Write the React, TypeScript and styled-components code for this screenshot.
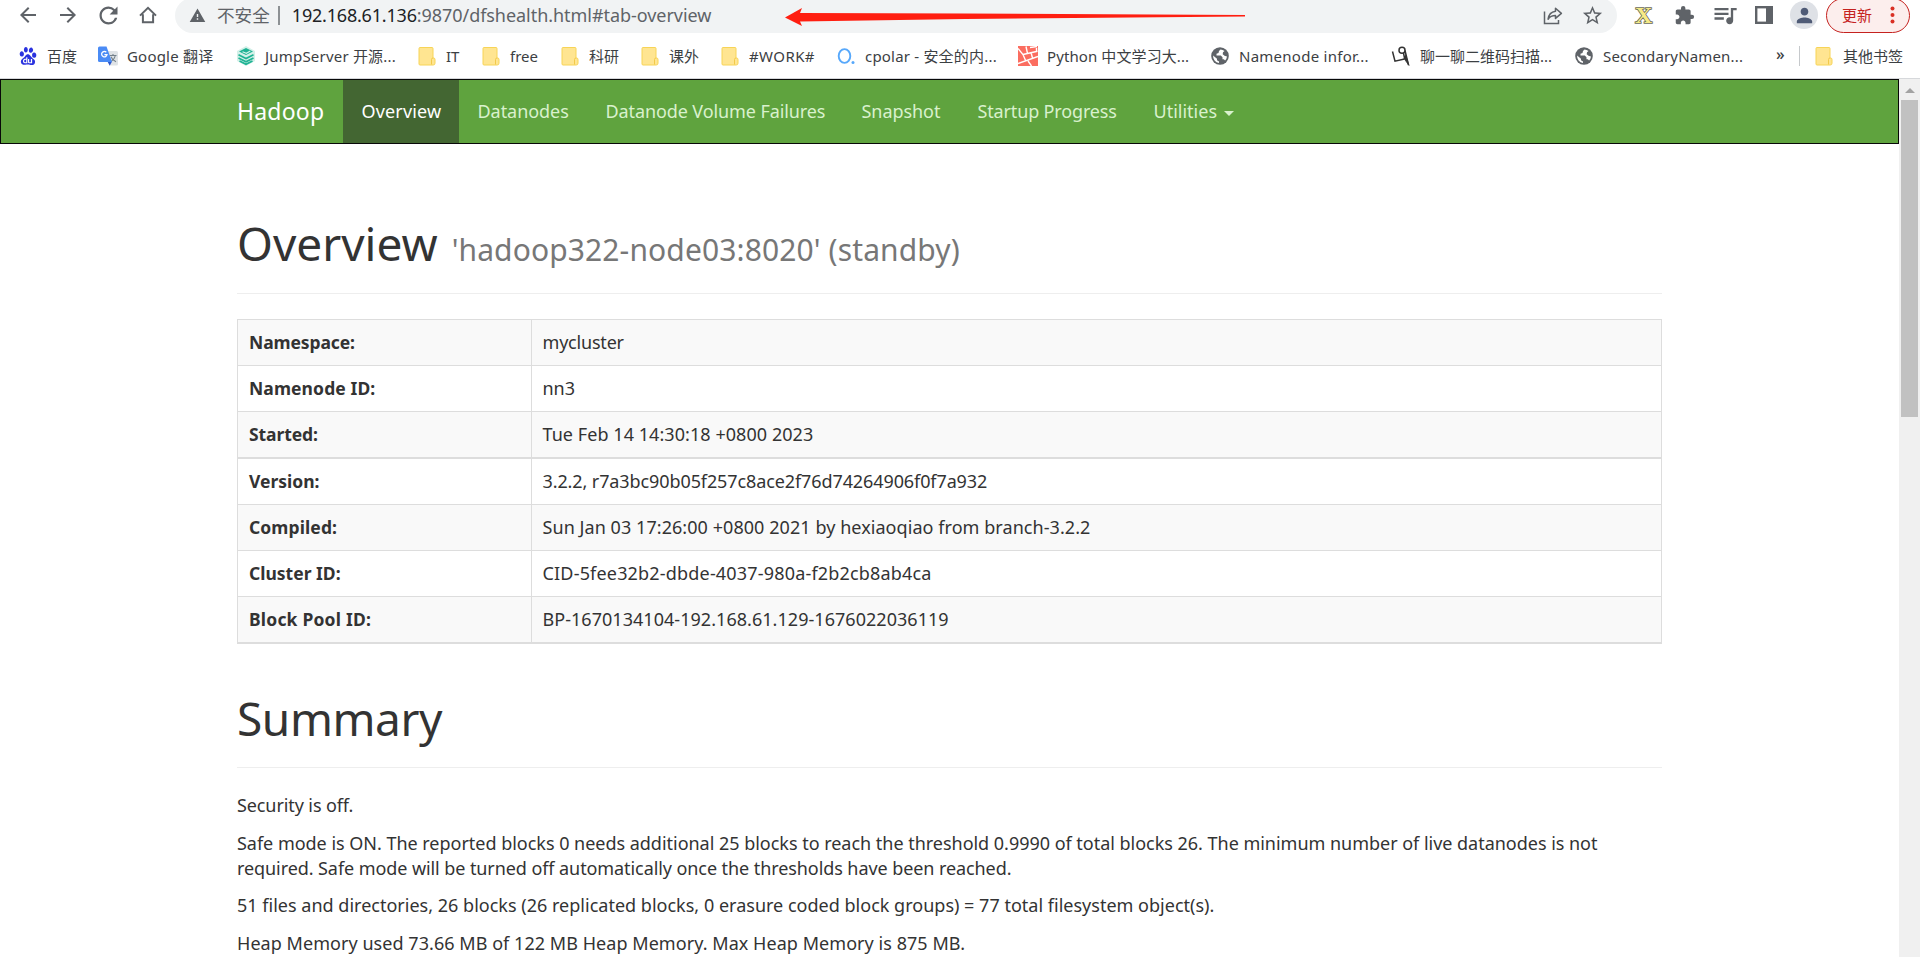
import React from 'react';
import styled, { createGlobalStyle } from 'styled-components';
import {
  MdArrowBack,
  MdArrowForward,
  MdRefresh,
  MdWarning,
  MdStarBorder,
  MdExtension,
  MdQueueMusic,
  MdPerson,
} from 'react-icons/md';
import { SiBaidu } from 'react-icons/si';

const GlobalStyle = createGlobalStyle`
  * { box-sizing: border-box; }
  body {
    margin: 0;
    background: #fff;
    color: #333;
    font-family: "Noto Sans", "Noto Sans CJK SC", sans-serif;
    font-size: 18px;
    line-height: 25px;
    overflow: hidden;
  }
`;

/* ---------- browser chrome ---------- */

const Window = styled.div`
  width: 1920px;
  height: 957px;
  display: flex;
  flex-direction: column;
  overflow: hidden;
`;

const Toolbar = styled.div`
  flex: none;
  height: 33px;
  display: flex;
  padding-left: 8px;
  color: #5f6368;
`;

const NavSlot = styled.span`
  width: 40px;
  height: 30px;
  display: flex;
  align-items: center;
  justify-content: center;
`;

const Omnibox = styled.div`
  position: relative;
  width: 1442px;
  height: 35px;
  margin: -2px 0 0 7px;
  padding: 0 13px 0 14px;
  border-radius: 18px;
  background: #f1f3f4;
  display: flex;
  align-items: center;
  line-height: 35px;
`;

const Insecure = styled.span`
  margin-left: 11px;
  font-size: 17.6px;
  white-space: nowrap;
`;

const Separator = styled.span`
  width: 2px;
  height: 19px;
  margin: 0 12px 0 8px;
  background: #8d9194;
`;

const Url = styled.span`
  white-space: nowrap;
  font-size: 18px;
  letter-spacing: -0.05px;
  flex: 1;
`;

const Host = styled.span`
  color: #202124;
  letter-spacing: -0.2px;
`;

const RedArrow = styled.svg`
  position: absolute;
  left: 610px;
  top: 9px;
`;

const OmniActions = styled.span`
  display: flex;
  align-items: center;
  gap: 18px;
  height: 31px;
`;

const Extensions = styled.div`
  display: flex;
  align-items: center;
  height: 30px;
  margin-left: 18px;
`;

const ExtSlot = styled.span<{ $w: number }>`
  width: ${(p) => p.$w}px;
  height: 30px;
  display: flex;
  align-items: center;
`;

const ExtX = styled.span`
  font: bold 24px/30px "Liberation Serif", serif;
  color: #f6ea86;
  -webkit-text-stroke: 1.6px #6a6a5a;
  paint-order: stroke fill;
`;

const Avatar = styled.span`
  width: 28px;
  height: 28px;
  border-radius: 50%;
  background: #dee1e6;
  color: #4f5b76;
  display: flex;
  align-items: center;
  justify-content: center;
`;

const UpdatePill = styled.div`
  width: 84px;
  height: 35px;
  margin: 0 0 0 8px;
  padding: 0 14px 0 15px;
  border: 1.5px solid #c5221f;
  border-radius: 18px;
  background: #fceeed;
  color: #c5221f;
  font-size: 15px;
  display: flex;
  align-items: center;
  justify-content: space-between;
`;

const BookmarkBar = styled.div`
  flex: none;
  height: 46px;
  border-bottom: 1px solid #d6d8db;
  display: flex;
  align-items: center;
  padding-left: 18px;
  color: #3c4043;
`;

const Bookmark = styled.div<{ $w: number; $ls?: number }>`
  width: ${(p) => p.$w}px;
  display: flex;
  align-items: center;
  gap: 9px;
  font-size: 15px;
  line-height: 44px;
  letter-spacing: ${(p) => p.$ls ?? 0}px;
  white-space: nowrap;
`;

const BookmarkIcon = styled.span`
  width: 20px;
  height: 20px;
  flex: none;
  display: flex;
  align-items: center;
  justify-content: center;
`;

const More = styled.span`
  width: 23px;
  font-size: 16px;
  font-weight: 500;
  line-height: 30px;
  padding-bottom: 4px;
`;

const BarDivider = styled.span`
  width: 1px;
  height: 20px;
  margin-right: 14px;
  background: #c6c9cc;
`;

/* ---------- page ---------- */

const Viewport = styled.div`
  flex: 1;
  min-height: 0;
  display: flex;
`;

const Page = styled.div`
  width: 1899px;
  overflow: hidden;
`;

const Navbar = styled.nav`
  height: 65px;
  border: 1px solid #080808;
  background: #5fa33e;
  display: flex;
  padding-left: 236px;
  line-height: 62px;
`;

const Brand = styled.span`
  width: 106px;
  color: #fff;
  font-size: 23px;
  line-height: 62px;
  letter-spacing: 0.2px;
`;

const NavLink = styled.span<{ $w: number; $active?: boolean; $ls?: number }>`
  width: ${(p) => p.$w}px;
  padding-left: 18.5px;
  background: ${(p) => (p.$active ? '#436632' : 'transparent')};
  color: ${(p) => (p.$active ? '#fff' : '#d9f1cd')};
  letter-spacing: ${(p) => p.$ls ?? 0}px;
  white-space: nowrap;
`;

const Caret = styled.span`
  display: inline-block;
  margin-left: 7px;
  vertical-align: 2px;
  border-top: 5px solid currentColor;
  border-left: 5px solid transparent;
  border-right: 5px solid transparent;
`;

const Container = styled.main`
  width: 1425px;
  margin: 0 0 0 237px;
`;

const PageHeader = styled.header<{ $top: number; $height: number }>`
  margin: ${(p) => p.$top}px 0 25px;
  height: ${(p) => p.$height}px;
  border-bottom: 1px solid #eee;
`;

const Title = styled.h1<{ $ls: number }>`
  margin: 0;
  font-size: 46px;
  font-weight: 400;
  line-height: 50px;
  letter-spacing: ${(p) => p.$ls}px;
`;

const Small = styled.small`
  margin-left: 2px;
  font-size: 30px;
  line-height: 1;
  color: #777;
  letter-spacing: 0.12px;
`;

const InfoTable = styled.div`
  border: 1px solid #ddd;
  border-bottom: 0;
`;

const InfoRow = styled.div<{ $striped: boolean; $groupEnd: boolean }>`
  display: grid;
  grid-template-columns: 293px 1fr;
  border-bottom: ${(p) => (p.$groupEnd ? 2 : 1)}px solid #ddd;
  background: ${(p) => (p.$striped ? '#f9f9f9' : '#fff')};
`;

const Label = styled.div<{ $ls: number }>`
  height: 45px;
  padding: 10px 10px 10px 11px;
  font-size: 17.5px;
  font-weight: 700;
  letter-spacing: ${(p) => p.$ls}px;
`;

const Value = styled.div<{ $ls: number }>`
  border-left: 1px solid #ddd;
  padding: 10px 10px 10px 10.5px;
  letter-spacing: ${(p) => p.$ls}px;
`;

const Paragraph = styled.p<{ $ls: number }>`
  margin: 0 0 12.5px;
  letter-spacing: ${(p) => p.$ls}px;
  white-space: nowrap;
`;

const SecondLine = styled.span`
  display: block;
  letter-spacing: -0.08px;
`;

const ScrollTrack = styled.div`
  width: 21px;
  background: #f0f0f0;
  display: flex;
  flex-direction: column;
  align-items: center;
`;

const ScrollArrow = styled.span`
  margin: 9px 0 7px;
  border: 5px solid transparent;
  border-top: 0;
  border-bottom-color: #a3a3a3;
`;

const ScrollThumb = styled.span`
  width: 17px;
  height: 317px;
  background: #c1c1c1;
`;

/* ---------- icons ---------- */

const HomeIcon = () => (
  <svg width="18" height="18" viewBox="0 0 18 18" fill="none" stroke="#5f6368" strokeWidth="2">
    <path d="M1 9.6 9 1.9l8 7.7M3.9 8.2v8.1h10.2V8.2" />
  </svg>
);

const ShareIcon = () => (
  <svg width="20" height="18" viewBox="0 0 20 18" fill="none" stroke="#5f6368" strokeWidth="1.5">
    <path d="M1.5 4.5v12h14v-3.5" />
    <path d="M12.5 1.300 18.400 6.400l-5.900 5V8.600c-3.300 0-5.600 1-7.400 3.600.5-4 2.900-7.300 7.400-7.900z" strokeLinejoin="round" />
  </svg>
);

const PanelIcon = () => (
  <svg width="18" height="18" viewBox="0 0 18 18">
    <rect x="1.200" y="1.200" width="15.600" height="15.600" fill="none" stroke="#5f6368" strokeWidth="2.400" />
    <rect x="11" y="1" width="6" height="16" fill="#5f6368" />
  </svg>
);

const DotsIcon = () => (
  <svg width="5" height="18" viewBox="0 0 5 18" fill="#d93025">
    <circle cx="2.500" cy="2.500" r="2" />
    <circle cx="2.500" cy="9" r="2" />
    <circle cx="2.500" cy="15.500" r="2" />
  </svg>
);

const FolderIcon = () => (
  <svg width="18" height="20" viewBox="0 0 18 20">
    <path d="M1 2.500Q1 1.500 2 1.500h12q1 0 1 1V12h1q1 .3 1 1.500v3.700q0 1.800-1.800 1.800H2q-1 0-1-1z" fill="#ffe591" stroke="#f7d457" />
    <path d="M13.500 18.500v-5q0-1.500 1.500-1.500" fill="none" stroke="#f2c94a" />
  </svg>
);

const TranslateIcon = () => (
  <svg width="20" height="20" viewBox="0 0 20 20">
    <path d="M8 5h10.500Q20 5 20 6.500V18q0 1.500-1.500 1.500H12z" fill="#dfe3e6" />
    <path d="M11.500 9.500h7M15 8v1.500m2.300 0c-.7 3-2.500 5-5 6.300m.7-5c.8 2.200 2.500 4 5 5" fill="none" stroke="#74818b" strokeWidth="1.100" />
    <path d="M9.500 15.500h4.500l-2.300 4.200z" fill="#2d56c9" />
    <path d="M1.500.500H8.500L14 16H1.500Q0 16 0 14.500V2Q0 .500 1.500.500z" fill="#4a8bf5" />
    <path d="M8.300 6.300A2.700 2.700 0 1 0 9 8.700H6.400" fill="none" stroke="#fff" strokeWidth="1.300" />
  </svg>
);

const JumpServerIcon = () => (
  <svg width="20" height="20" viewBox="0 0 20 20">
    <path d="M10 0l9 5v10l-9 5-9-5V5z" fill="#d3f0e8" />
    <path d="M10 2l7 3.500L10 9 3 5.500z" fill="#1fb394" />
    <path d="M6.500 5.800l3.800 1.500 4-2.300" fill="none" stroke="#d3f0e8" strokeWidth="1.200" />
    <path d="M2.500 8.800 10 12.500l7.500-3.700M2.500 12 10 15.700l7.500-3.700M3.500 15l6.500 3.300 6.500-3.300" fill="none" stroke="#1fb394" strokeWidth="1.700" />
  </svg>
);

const CpolarIcon = () => (
  <svg width="18" height="18" viewBox="0 0 18 18">
    <ellipse cx="7.500" cy="9" rx="5.800" ry="6.900" fill="none" stroke="#57a8fb" strokeWidth="1.900" />
    <circle cx="16" cy="15.500" r="1.500" fill="#57a8fb" />
  </svg>
);

const PythonSiteIcon = () => (
  <svg width="20" height="20" viewBox="0 0 20 20">
    <path d="M0 0h20v20H0z" fill="#fb6d60" />
    <path d="M0 2.500 5 8.500l3 7M5 8.500l14.500-3.300M0 17.500l20-7M8 .5l1.500 7M12 1.500l7-1M18.500 2v4M10 15l3.500 5M13 6.500l1.500 5.500" fill="none" stroke="#fff" strokeWidth="1.400" />
  </svg>
);

const ScanSiteIcon = () => (
  <svg width="20" height="20" viewBox="0 0 20 20" fill="none" stroke="#333" strokeWidth="1.500">
    <circle cx="11" cy="4.200" r="3" />
    <path d="M1.500 5.500 4 15.200l9.500-2.200M14 4.500 17.500 19M12.500 7l1.200 6" />
    <path d="M14.500 8.500 18 19.500l-5-7" fill="#333" strokeWidth=".8" />
  </svg>
);

const GlobeIcon = () => (
  <svg width="18" height="18" viewBox="0 0 18 18">
    <circle cx="9" cy="9" r="8.800" fill="#5f6368" />
    <path
      d="M9.500 2.500 8 4 7.500 6l-2 .8V8.500h4.300l1.700 1.700v2h1.300l1.300 1.300A7 7 0 0 0 16 9.500l-2.500-.8-1.800-1.500.3-2 1.500-1.200A7 7 0 0 0 9.500 2.500z"
      fill="#fff"
    />
    <path d="M2.100 8.500 6 11.800v1.400l2 1.300v1.600A7.100 7.100 0 0 1 2.100 8.500z" fill="#fff" />
  </svg>
);

/* ---------- data ---------- */

const bookmarks: { label: string; w: number; ls?: number; icon: React.ReactNode }[] = [
  { label: '百度', w: 80, icon: <SiBaidu size={18} color="#2a32df" /> },
  { label: 'Google 翻译', w: 138, ls: 0.2, icon: <TranslateIcon /> },
  { label: 'JumpServer 开源...', w: 181, ls: 0.2, icon: <JumpServerIcon /> },
  { label: 'IT', w: 64, icon: <FolderIcon /> },
  { label: 'free', w: 79, icon: <FolderIcon /> },
  { label: '科研', w: 80, icon: <FolderIcon /> },
  { label: '课外', w: 80, icon: <FolderIcon /> },
  { label: '#WORK#', w: 116, ls: 0.4, icon: <FolderIcon /> },
  { label: 'cpolar - 安全的内...', w: 182, ls: 0.2, icon: <CpolarIcon /> },
  { label: 'Python 中文学习大...', w: 192, ls: 0.1, icon: <PythonSiteIcon /> },
  { label: 'Namenode infor...', w: 181, ls: 0.26, icon: <GlobeIcon /> },
  { label: '聊一聊二维码扫描...', w: 183, icon: <ScanSiteIcon /> },
  { label: 'SecondaryNamen...', w: 202, ls: 0.16, icon: <GlobeIcon /> },
];

const links = [
  { label: 'Overview', w: 116, ls: 0.15, active: true },
  { label: 'Datanodes', w: 128, ls: -0.05 },
  { label: 'Datanode Volume Failures', w: 256, ls: -0.1 },
  { label: 'Snapshot', w: 116, ls: -0.05 },
  { label: 'Startup Progress', w: 176, ls: -0.15 },
];

const rows = [
  { label: 'Namespace:', lls: -0.1, value: 'mycluster', ls: -0.2 },
  { label: 'Namenode ID:', lls: 0.1, value: 'nn3', ls: 0 },
  { label: 'Started:', lls: -0.1, value: 'Tue Feb 14 14:30:18 +0800 2023', ls: 0.06, end: true },
  { label: 'Version:', lls: 0, value: '3.2.2, r7a3bc90b05f257c8ace2f76d74264906f0f7a932', ls: -0.1 },
  { label: 'Compiled:', lls: 0.1, value: 'Sun Jan 03 17:26:00 +0800 2021 by hexiaoqiao from branch-3.2.2', ls: 0.06 },
  { label: 'Cluster ID:', lls: 0, value: 'CID-5fee32b2-dbde-4037-980a-f2b2cb8ab4ca', ls: 0.18 },
  { label: 'Block Pool ID:', lls: 0.2, value: 'BP-1670134104-192.168.61.129-1676022036119', ls: 0.04, end: true },
];

export default function App() {
  return (
    <Window>
      <GlobalStyle />
      <Toolbar>
        <NavSlot><MdArrowBack size={24} /></NavSlot>
        <NavSlot><MdArrowForward size={24} /></NavSlot>
        <NavSlot><MdRefresh size={27} /></NavSlot>
        <NavSlot><HomeIcon /></NavSlot>
        <Omnibox>
          <MdWarning size={17} />
          <Insecure>不安全</Insecure>
          <Separator />
          <Url><Host>192.168.61.136</Host>:9870/dfshealth.html#tab-overview</Url>
          <OmniActions>
            <ShareIcon />
            <MdStarBorder size={23} />
          </OmniActions>
          <RedArrow width="461" height="20" viewBox="0 0 461 20">
            <path d="M0 10.500 17 1l-2 5 L180 6.500 460 8v1.500L180 12 15 14.500 17 19z" fill="#ff1e10" />
          </RedArrow>
        </Omnibox>
        <Extensions>
          <ExtSlot $w={39}><ExtX>X</ExtX></ExtSlot>
          <ExtSlot $w={37}><MdExtension size={21} /></ExtSlot>
          <ExtSlot $w={44}><MdQueueMusic size={28} /></ExtSlot>
          <ExtSlot $w={35}><PanelIcon /></ExtSlot>
          <Avatar><MdPerson size={23} /></Avatar>
          <UpdatePill>更新<DotsIcon /></UpdatePill>
        </Extensions>
      </Toolbar>
      <BookmarkBar>
        {bookmarks.map((b) => (
          <Bookmark key={b.label} $w={b.w} $ls={b.ls}>
            <BookmarkIcon>{b.icon}</BookmarkIcon>
            {b.label}
          </Bookmark>
        ))}
        <More>»</More>
        <BarDivider />
        <Bookmark $w={95}>
          <BookmarkIcon><FolderIcon /></BookmarkIcon>
          其他书签
        </Bookmark>
      </BookmarkBar>

      <Viewport>
        <Page>
          <Navbar>
            <Brand>Hadoop</Brand>
            {links.map((l) => (
              <NavLink key={l.label} $w={l.w} $ls={l.ls} $active={l.active}>{l.label}</NavLink>
            ))}
            <NavLink $w={120}>Utilities<Caret /></NavLink>
          </Navbar>
          <Container>
            <PageHeader $top={74} $height={76}>
              <Title $ls={0}>Overview <Small>'hadoop322-node03:8020' (standby)</Small></Title>
            </PageHeader>
            <InfoTable>
              {rows.map((r, i) => (
                <InfoRow key={r.label} $striped={i % 2 === 0} $groupEnd={!!r.end}>
                  <Label $ls={r.lls}>{r.label}</Label>
                  <Value $ls={r.ls}>{r.value}</Value>
                </InfoRow>
              ))}
            </InfoTable>
            <PageHeader $top={49} $height={75}>
              <Title $ls={-0.4}>Summary</Title>
            </PageHeader>
            <Paragraph $ls={-0.1}>Security is off.</Paragraph>
            <Paragraph $ls={-0.022}>
              Safe mode is ON. The reported blocks 0 needs additional 25 blocks to reach the threshold 0.9990 of total blocks 26. The minimum number of live datanodes is not
              <SecondLine>
                required. Safe mode will be turned off automatically once the thresholds have been reached.
              </SecondLine>
            </Paragraph>
            <Paragraph $ls={0.01}>
              51 files and directories, 26 blocks (26 replicated blocks, 0 erasure coded block groups) = 77 total filesystem object(s).
            </Paragraph>
            <Paragraph $ls={0.05}>
              Heap Memory used 73.66 MB of 122 MB Heap Memory. Max Heap Memory is 875 MB.
            </Paragraph>
          </Container>
        </Page>
        <ScrollTrack>
          <ScrollArrow />
          <ScrollThumb />
        </ScrollTrack>
      </Viewport>
    </Window>
  );
}
